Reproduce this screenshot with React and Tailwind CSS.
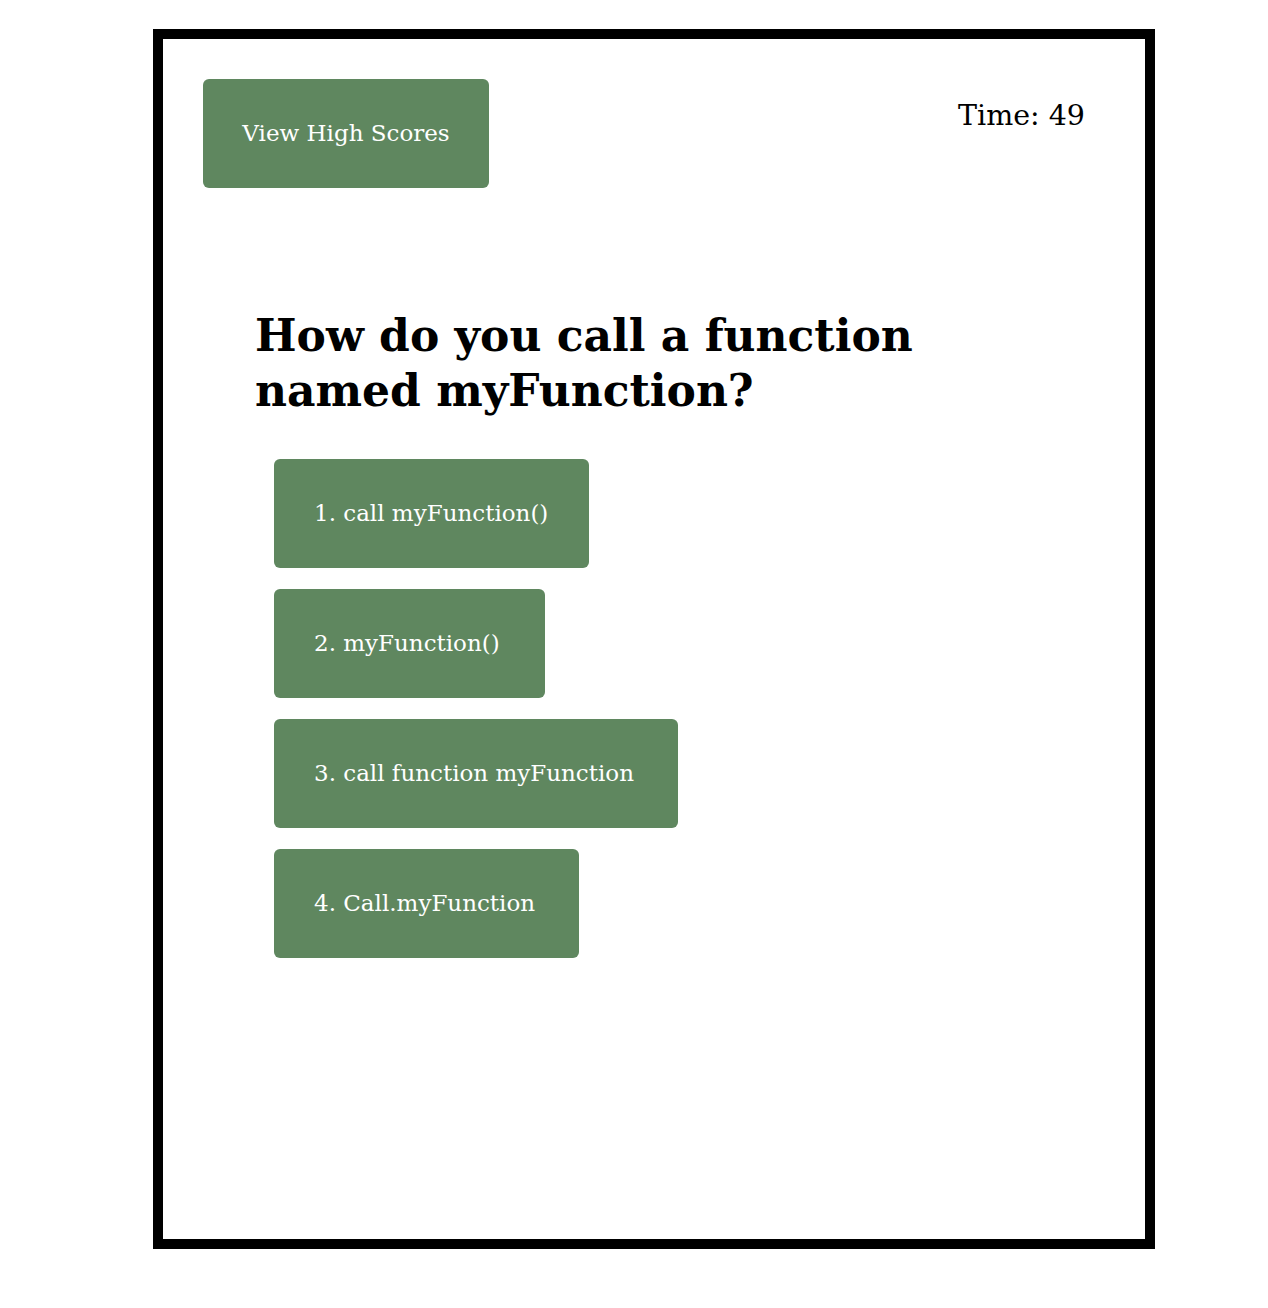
export default function App() {
  const answers = [
    { text: "1. call myFunction()", w: "w-[315px]" },
    { text: "2. myFunction()", w: "w-[271px]" },
    { text: "3. call function myFunction", w: "w-[404px]" },
    { text: "4. Call.myFunction", w: "w-[305px]" },
  ];

  return (
    <div className="min-h-[1308px] bg-white pt-[29px] pl-[153px] font-['DejaVu_Serif',serif] text-black">
      <div className="w-[1002px] h-[1220px] border-[10px] border-black pt-[40px] pl-[40px] pr-[60px]">
        {/* header */}
        <div className="flex justify-between items-start">
          <button className="w-[286px] h-[109px] rounded-[6px] bg-[#5f875f] text-white text-[23px] flex items-center justify-center">
            View High Scores
          </button>
          <div className="text-[28.5px] leading-[34px] mt-[20px]">Time: 49</div>
        </div>

        {/* question */}
        <h1 className="mt-[120px] ml-[52px] text-[44px] leading-[55px] font-bold w-[720px]">
          How do you call a function named myFunction?
        </h1>

        <div className="mt-[41px] ml-[71px] flex flex-col gap-[21px]">
          {answers.map((a) => (
            <button
              key={a.text}
              className={`${a.w} h-[109px] rounded-[6px] bg-[#5f875f] text-white text-[23px] flex items-center pl-[40px]`}
            >
              {a.text}
            </button>
          ))}
        </div>
      </div>
    </div>
  );
}
